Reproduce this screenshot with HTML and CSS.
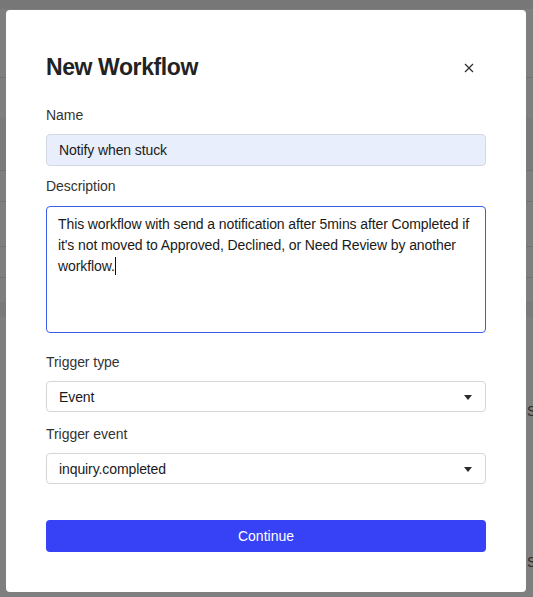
FILE: index.html
```html
<!DOCTYPE html>
<html lang="en">
<head>
<meta charset="utf-8">
<title>New Workflow</title>
<link rel="stylesheet" href="styles.css">
</head>
<body>
<div class="backdrop">
  <div class="bg-top"></div>
  <div class="bg-row r1"></div>
  <div class="bg-row r2"></div>
  <div class="bg-row r3"></div>
  <div class="bg-row r4"></div>
  <div class="bg-row r5"></div>
  <div class="bg-band"></div>
  <div class="bg-text t1">S</div>
  <div class="bg-text t2">S</div>
</div>

<div class="modal">
  <div class="modal-header">
    <h1 class="modal-title">New Workflow</h1>
    <button class="close" aria-label="Close">
      <svg width="10" height="10" viewBox="0 0 10 10"><path d="M1 1L9 9M9 1L1 9" stroke="#333" stroke-width="1.3" fill="none"/></svg>
    </button>
  </div>

  <div class="field">
    <label class="label">Name</label>
    <div class="input input-filled">Notify when stuck</div>
  </div>

  <div class="field">
    <label class="label label-desc">Description</label>
    <div class="textarea">This workflow with send a notification after 5mins after Completed if it's not moved to Approved, Declined, or Need Review by another workflow.<span class="caret"></span></div>
  </div>

  <div class="field field-gap field-spaced">
    <label class="label">Trigger type</label>
    <div class="input select"><span>Event</span><span class="arrow"></span></div>
  </div>

  <div class="field">
    <label class="label">Trigger event</label>
    <div class="input select"><span>inquiry.completed</span><span class="arrow"></span></div>
  </div>

  <button class="primary">Continue</button>
</div>
</body>
</html>
```

FILE: styles.css
```css
html, body {
  margin: 0;
  padding: 0;
  height: 100%;
}
body {
  background: #7f7f7f;
  font-family: "Liberation Sans", Arial, sans-serif;
  overflow: hidden;
  position: relative;
}
.backdrop {
  height: 597px;
  display: flex;
  flex-direction: column;
  position: relative;
}
.bg-top {
  height: 9px;
  background: #777777;
}
.bg-row {
  border-bottom: 1px solid #717171;
}
.r1 { height: 68px; }
.r2 { height: 92px; background: linear-gradient(#7f7f7f 0 40px, #7b7b7b 40px); }
.r3 { height: 30px; }
.r4 { height: 44px; }
.r5 { height: 30px; }
.bg-band {
  height: 15px;
  margin-top: 24px;
  background: #7a7a7a;
}
.bg-text {
  position: absolute;
  left: 527px;
  font-size: 14px;
  color: #2a2a2a;
}
.t1 { top: 403px; }
.t2 { top: 554px; }

.modal {
  position: absolute;
  left: 6px;
  top: 10px;
  width: 520px;
  height: 582px;
  box-sizing: border-box;
  background: #fff;
  border-radius: 4px;
  padding: 43px 40px 40px;
  display: flex;
  flex-direction: column;
}
.modal-header {
  display: flex;
  align-items: center;
  justify-content: space-between;
  height: 28px;
  margin-bottom: 24px;
}
.modal-title {
  margin: 0;
  font-size: 23px;
  line-height: 28px;
  font-weight: 700;
  letter-spacing: -0.4px;
  color: #222;
}
.close {
  border: 0;
  background: none;
  padding: 0;
  width: 10px;
  height: 10px;
  margin-right: 12px;
  margin-top: 2px;
  display: flex;
}
.field {
  display: flex;
  flex-direction: column;
  margin-bottom: 10px;
}
.field-gap {
  margin-top: 9px;
}
.field-spaced {
  margin-bottom: 12px;
}
.label {
  font-size: 14px;
  line-height: 20px;
  color: #333;
  margin-bottom: 9px;
  letter-spacing: -0.05px;
}
.label-desc {
  margin-bottom: 10px;
}
.input {
  height: 32px;
  box-sizing: border-box;
  border: 1px solid #d6d6d6;
  border-radius: 4px;
  padding: 0 12px;
  font-size: 14px;
  color: #1a1a1a;
  display: flex;
  align-items: center;
  letter-spacing: -0.1px;
}
.input-filled {
  background: #e8eefb;
  border-color: #d3d9e4;
}
.select {
  height: 31px;
  justify-content: space-between;
  padding-right: 13px;
}
.arrow {
  width: 0;
  height: 0;
  border-left: 4px solid transparent;
  border-right: 4px solid transparent;
  border-top: 5px solid #2a2a2a;
  margin-top: 1px;
}
.textarea {
  height: 127px;
  box-sizing: border-box;
  border: 1px solid #3b5ce6;
  border-radius: 4px;
  padding: 7px 11px;
  font-size: 14px;
  line-height: 21px;
  color: #1a1a1a;
  letter-spacing: -0.1px;
}
.caret {
  display: inline-block;
  width: 1px;
  height: 18px;
  background: #111;
  vertical-align: -4px;
}
.primary {
  margin-top: 26px;
  height: 32px;
  border: 0;
  border-radius: 4px;
  background: #3741f5;
  color: #fff;
  font-family: "Liberation Sans", Arial, sans-serif;
  font-size: 14px;
}
```
